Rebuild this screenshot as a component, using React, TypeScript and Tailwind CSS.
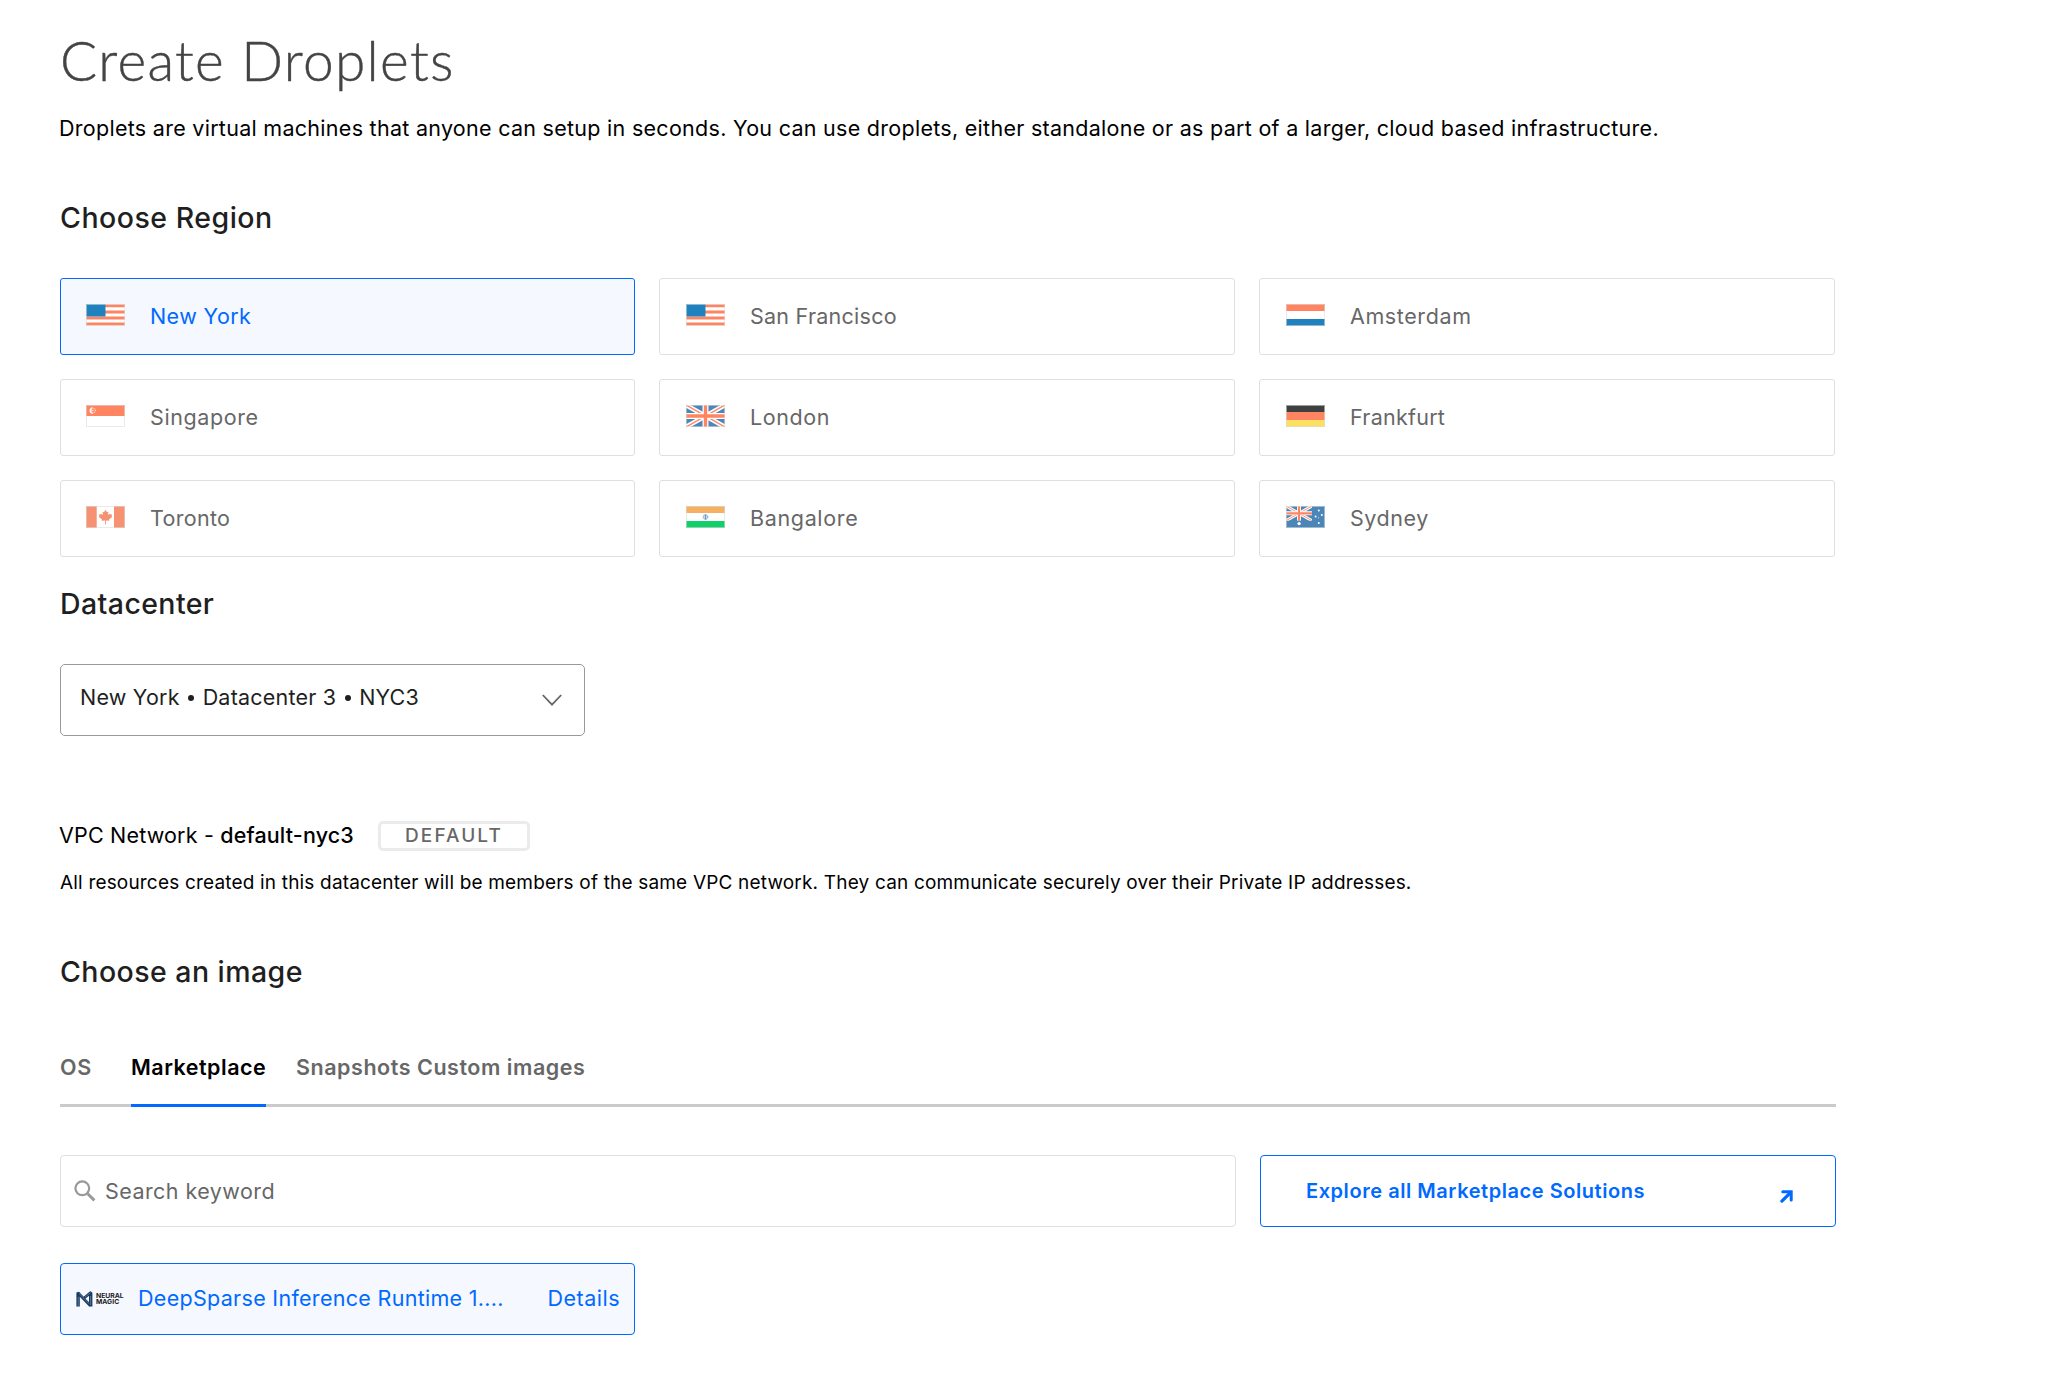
import type { ReactNode } from "react";

const RED = "#ff8562";

function FlagFrame({ children }: { children: ReactNode }) {
  return (
    <svg width="39" height="22" viewBox="0 0 39 22" className="shrink-0">
      <rect width="39" height="22" fill="#fff" />
      {children}
      <rect x="0.5" y="0.5" width="38" height="21" fill="none" stroke="#dcdcdc" strokeOpacity="0.6" />
    </svg>
  );
}

function UnionJack() {
  return (
    <>
      <rect width="39" height="22" fill="#4a86b8" />
      <path d="M0 0L39 22M39 0L0 22" stroke="#fff" strokeWidth="4.6" />
      <path d="M0 0L39 22M39 0L0 22" stroke={RED} strokeWidth="1.4" />
      <path d="M19.5 0V22M0 11H39" stroke="#fff" strokeWidth="6" />
      <path d="M19.5 0V22M0 11H39" stroke={RED} strokeWidth="3.4" />
    </>
  );
}

function UsFlag() {
  return (
    <FlagFrame>
      <path d="M0 1.8H39M0 7.9H39M0 14H39M0 20.1H39" stroke={RED} strokeWidth="3" />
      <rect width="19.5" height="12.5" fill="#1f82bf" />
    </FlagFrame>
  );
}

function Tricolor({ colors }: { colors: [string, string, string] }) {
  return (
    <FlagFrame>
      <rect width="39" height="7" fill={colors[0]} />
      <rect y="7" width="39" height="8" fill={colors[1]} />
      <rect y="15" width="39" height="7" fill={colors[2]} />
    </FlagFrame>
  );
}

function IndiaFlag() {
  return (
    <FlagFrame>
      <rect width="39" height="7" fill="#f5b161" />
      <rect y="15" width="39" height="7" fill="#12ce6b" />
      <circle cx="19.5" cy="11" r="2.3" fill="#c9dcee" stroke="#6b9acb" strokeWidth="1" strokeDasharray="1.1 0.4" />
      <path d="M19.5 8.5V13.5" stroke="#6b9acb" strokeWidth="1" />
    </FlagFrame>
  );
}

function SingaporeFlag() {
  return (
    <FlagFrame>
      <rect width="39" height="11" fill={RED} />
      <path d="M6.8 2.6A3 3 0 1 0 6.8 8.6A3.6 3.6 0 0 1 6.8 2.6Z" fill="#fff" stroke="#fff" strokeWidth="0.5" />
      <g fill="#fff">
        <circle cx="8" cy="3.6" r="0.6" />
        <circle cx="9.4" cy="5.2" r="0.6" />
        <circle cx="6.8" cy="5.4" r="0.6" />
        <circle cx="8.6" cy="7" r="0.6" />
        <circle cx="7" cy="7.4" r="0.5" />
      </g>
    </FlagFrame>
  );
}

function CanadaFlag() {
  return (
    <FlagFrame>
      <rect width="10.7" height="22" fill="#f69271" />
      <rect x="28" width="11" height="22" fill="#f69271" />
      <path
        d="M19.5 3.8L21 6.2L22.3 5.8L22.2 9L23.6 8L26 8.6L25.6 10L26.3 10.8L23 13.6L23.3 14.8L19.9 14.5V18.6H19.1V14.5L15.7 14.8L16 13.6L12.7 10.8L13.4 10L13 8.6L15.4 8L16.8 9L16.7 5.8L18 6.2Z"
        fill="#f69271"
      />
    </FlagFrame>
  );
}

function AustraliaFlag() {
  return (
    <FlagFrame>
      <rect width="39" height="22" fill="#4a86b8" />
      <svg width="26" height="14.7" viewBox="0 0 39 22">
        <UnionJack />
      </svg>
      <g fill="#fff">
        <circle cx="13.1" cy="17.6" r="1.7" />
        <circle cx="32.8" cy="4.4" r="1" />
        <circle cx="29.6" cy="10.6" r="1" />
        <circle cx="35.8" cy="9" r="1" />
        <circle cx="32.8" cy="17" r="1" />
        <circle cx="32.6" cy="11.8" r="0.5" />
      </g>
    </FlagFrame>
  );
}

const regions: { name: string; flag: ReactNode; tracking: string }[] = [
  { name: "New York", flag: <UsFlag />, tracking: "tracking-[0.4px]" },
  { name: "San Francisco", flag: <UsFlag />, tracking: "tracking-[0.25px]" },
  { name: "Amsterdam", flag: <Tricolor colors={[RED, "#fff", "#1f82bf"]} />, tracking: "tracking-[0.6px]" },
  { name: "Singapore", flag: <SingaporeFlag />, tracking: "tracking-[0.6px]" },
  {
    name: "London",
    flag: (
      <FlagFrame>
        <UnionJack />
      </FlagFrame>
    ),
    tracking: "tracking-[0.6px]",
  },
  { name: "Frankfurt", flag: <Tricolor colors={["#3f4040", RED, "#fbe063"]} />, tracking: "tracking-[0.25px]" },
  { name: "Toronto", flag: <CanadaFlag />, tracking: "tracking-[0.3px]" },
  { name: "Bangalore", flag: <IndiaFlag />, tracking: "tracking-[0.65px]" },
  { name: "Sydney", flag: <AustraliaFlag />, tracking: "tracking-[0.55px]" },
];

function RegionCard({ index }: { index: number }) {
  const { name, flag, tracking } = regions[index];
  const selected = index === 0;
  return (
    <button
      className={`flex h-[77px] items-center rounded-[3px] border text-left ${
        selected ? "border-[#0069ff] bg-[#f5f8ff] text-[#0069ff]" : "border-[#dfdfdf] bg-white text-[#676767]"
      } ${index % 3 === 0 ? "pl-[25px]" : "pl-[26px]"}`}
    >
      <span className="-mt-[3px]">{flag}</span>
      <span className={`ml-[25px] pb-[2px] text-[21.5px] leading-7 ${tracking}`}>{name}</span>
    </button>
  );
}

function SectionTitle({ children, className }: { children: ReactNode; className: string }) {
  return <h2 className={`text-[28.5px] leading-10 font-medium text-[#1f1f1f] ${className}`}>{children}</h2>;
}

function Bullet() {
  return <span className="mx-[8.5px] inline-block h-[6px] w-[6px] rounded-full bg-[#1f1f1f] align-[4px]" />;
}

function NeuralMagicLogo() {
  return (
    <span className="flex items-center">
      <svg width="17" height="16" viewBox="0 0 17 16" fill="none">
        <path d="M2.1 1.4V15.6M14.7 1.4V15.6" stroke="#1b3a5f" strokeWidth="3.4" />
        <path d="M2.4 2.2L13.4 13.8M8.2 7L14.4 1.8" stroke="#1b3a5f" strokeWidth="2.8" strokeLinecap="round" />
        <path d="M2.2 6V15.6M14.6 5V14M3 2.4L13 12.8M9 6.2L14.4 1.8" stroke="#7fa3c4" strokeWidth="0.6" />
      </svg>
      <span className="ml-[3px] flex w-[29px] flex-col font-['Inter'] text-[6.8px] leading-[6.4px] font-bold text-[#222]">
        <span>NEURAL</span>
        <span>MAGIC</span>
      </span>
    </span>
  );
}

export default function App() {
  return (
    <main className="min-h-[1394px] bg-white pt-7 pl-[60px] font-['Inter',sans-serif] text-[21.5px] leading-7 text-black">
      <div className="w-[1776px]">
        <h1 className="font-['Lato',sans-serif] text-[55px] leading-16 font-light tracking-[1.3px] text-[#444] [-webkit-text-stroke:0.4px_#444]">
          Create Droplets
        </h1>
        <p className="mt-[22px] -ml-px tracking-[0.28px] whitespace-nowrap">
          Droplets are virtual machines that anyone can setup in seconds. You can use droplets, either standalone or as
          part of a larger, cloud based infrastructure.
        </p>

        <SectionTitle className="mt-14 tracking-[0.5px]">Choose Region</SectionTitle>
        <div className="mt-10 grid grid-cols-[575px_576px_576px] gap-6">
          {regions.map((region, i) => (
            <RegionCard key={region.name} index={i} />
          ))}
        </div>

        <SectionTitle className="mt-[27px] tracking-[0.4px]">Datacenter</SectionTitle>
        <button className="mt-10 flex h-[72px] w-[525px] items-center justify-between rounded-[5px] border border-[#999] pr-[22px] pl-[19px] text-left text-[#1f1f1f]">
          <span className="pb-[7px] tracking-[0.2px]">
            New York
            <Bullet />
            Datacenter 3
            <Bullet />
            NYC3
          </span>
          <svg width="20" height="12" viewBox="0 0 20 12" fill="none" stroke="#666" strokeWidth="1.8">
            <path d="M0.8 1L10 10.6L19.2 1" />
          </svg>
        </button>

        <div className="mt-[85px] flex items-start">
          <p className="-ml-px w-[295px] whitespace-nowrap">
            <span className="tracking-[0.18px]">VPC Network - </span>
            <strong className="font-medium tracking-[0.15px]">default-nyc3</strong>
          </p>
          <span className="ml-6 flex h-[30px] w-[152px] items-center justify-center rounded-[5px] border-3 border-[#ebebeb] text-[19px] font-medium tracking-[2.1px] text-[#676767]">
            DEFAULT
          </span>
        </div>
        <p className="mt-[19px] text-[19px] leading-[26px] tracking-[0.18px] whitespace-nowrap">
          All resources created in this datacenter will be members of the same VPC network. They can communicate
          securely over their Private IP addresses.
        </p>

        <SectionTitle className="mt-14 tracking-[0.45px]">Choose an image</SectionTitle>
        <nav className="mt-[61px] flex h-[54px] border-b-3 border-[#cbcbcb] font-semibold text-[#676767]">
          <a className="w-[71px] tracking-[0.8px]">OS</a>
          <a className="h-[54px] w-[135px] border-b-3 border-[#0069ff] tracking-[0.5px] text-black">Marketplace</a>
          <a className="ml-[30px] tracking-[0.54px]">Snapshots Custom images</a>
        </nav>

        <div className="mt-12 flex gap-6">
          <label className="flex h-[72px] w-[1176px] items-center rounded-[4px] border border-[#dfdfdf] pl-[13px] text-[#676767]">
            <svg width="22" height="22" viewBox="0 0 22 22" fill="none" stroke="#999">
              <circle cx="8.3" cy="8.3" r="6.9" strokeWidth="2.2" />
              <path d="M13.2 13.2L20.4 20.4" strokeWidth="2.9" />
            </svg>
            <span className="ml-[9px] pb-px tracking-[0.44px]">Search keyword</span>
          </label>
          <a className="flex h-[72px] w-[576px] items-center justify-between rounded-[4px] border border-[#0069ff] pr-[42px] pl-[45px] text-[20px] font-semibold text-[#0069ff]">
            <span className="tracking-[0.55px]">Explore all Marketplace Solutions</span>
            <svg width="13" height="13" viewBox="0 0 13 13" fill="none" stroke="#0069ff" className="mt-[11px]">
              <path d="M1.9 11.1L10.2 2.8" strokeWidth="3.2" strokeLinecap="round" />
              <path d="M2.8 1.8H11.2V10" strokeWidth="3" strokeLinecap="round" />
            </svg>
          </a>
        </div>

        <div className="mt-9 flex h-[72px] w-[575px] items-center rounded-[4px] border border-[#0069ff] bg-[#f5f8ff] pr-[14px] pl-[15px] text-[#0069ff]">
          <NeuralMagicLogo />
          <span className="ml-[13px] pb-[2px] tracking-[0.3px]">DeepSparse Inference Runtime 1....</span>
          <a className="ml-auto pb-[2px] tracking-[0.5px]">Details</a>
        </div>
      </div>
    </main>
  );
}
